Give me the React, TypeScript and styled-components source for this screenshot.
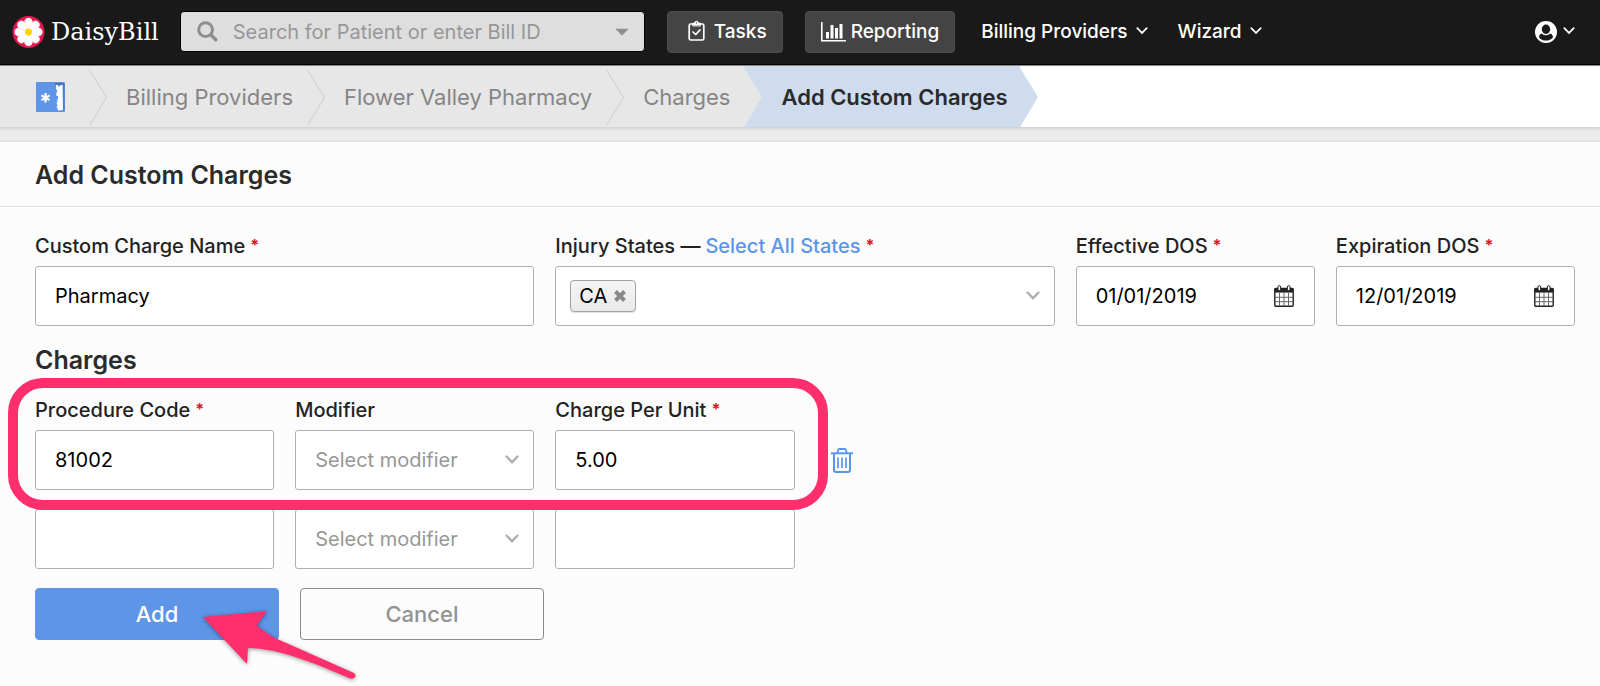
import React from "react";
import styled, { createGlobalStyle, css } from "styled-components";

const GlobalStyle = createGlobalStyle`
  *, *::before, *::after { box-sizing: border-box; }
  body {
    margin: 0;
    background: #fcfcfc;
    color: #222;
    font-family: Inter, "Liberation Sans", sans-serif;
    font-size: 20px;
    line-height: 24px;
  }
  button, input, select { font: inherit; margin: 0; }
`;

/* ---------- top bar ---------- */

const TopBar = styled.header`
  display: flex;
  align-items: center;
  height: 66px;
  padding: 0 25px 2px 12px;
  background: #191919;
  border-bottom: 1px solid #8c8c8c;
  box-shadow: inset 0 -1px 0 #000;
`;

const Brand = styled.a`
  display: flex;
  align-items: center;
  gap: 6px;
  flex: none;
  margin-right: 21px;
  color: #fff;
  font-family: "DejaVu Serif", serif;
  font-size: 24px;
  text-decoration: none;
`;

const SearchBox = styled.label`
  display: flex;
  align-items: center;
  flex: 0 1 465px;
  height: 41px;
  margin-right: 22px;
  padding: 0 15px 0 16px;
  background: #dedede;
  border: 1px solid #000;
  border-radius: 4px;
  min-width: 0;
`;

const SearchInput = styled.input`
  flex: 1;
  min-width: 0;
  margin-left: 15px;
  padding: 0;
  border: 0;
  outline: 0;
  background: transparent;
  color: #333;
  &::placeholder { color: #979797; opacity: 1; }
`;

const navItem = css`
  display: flex;
  align-items: center;
  flex: none;
  color: #fff;
  font-size: 19px;
  font-weight: 500;
  white-space: nowrap;
`;

const NavButton = styled.a<{ $gap: number; $inset: number }>`
  ${navItem}
  gap: ${(p) => p.$gap}px;
  height: 42px;
  margin-right: 22px;
  padding: 0 15px 0 ${(p) => p.$inset}px;
  background: #444;
  border: 1px solid #4d4d4d;
  border-radius: 4px;
  text-decoration: none;
`;

const NavMenu = styled.button`
  ${navItem}
  gap: 8px;
  margin-left: 4px;
  margin-right: 26px;
  padding: 0;
  border: 0;
  background: none;
`;

const UserMenu = styled(NavMenu)`
  gap: 6px;
  margin-left: auto;
  margin-right: 0;
`;

/* ---------- breadcrumb ---------- */

const Trail = styled.nav`
  background: #fff;
  box-shadow: 0 1px 4px rgba(0, 0, 0, 0.16);
  position: relative;
`;

const TrailList = styled.ol`
  display: flex;
  height: 61px;
  margin: 0;
  padding: 0;
  list-style: none;
`;

const Crumb = styled.li<{ $current?: boolean }>`
  display: flex;
  flex: none;
  align-items: center;
  background: ${(p) => (p.$current ? "#cfdcee" : "#e7e7e7")};
`;

const CrumbLink = styled.a<{ $current?: boolean }>`
  padding: 0 ${(p) => (p.$current ? 12 : 14)}px 0 19px;
  color: ${(p) => (p.$current ? "#2a2a2a" : "#858585")};
  font-size: 22px;
  font-weight: ${(p) => (p.$current ? 600 : 400)};
  text-decoration: none;
  white-space: nowrap;
`;

const HomeLink = styled.a`
  display: flex;
  padding: 0 24px 0 36px;
`;

/* ---------- panel ---------- */

const Page = styled.main`
  background: #ebebeb;
  padding-top: 15px;
`;

const Panel = styled.section`
  background: #fcfcfc;
  box-shadow: 0 -1px 2px rgba(0, 0, 0, 0.06);
`;

const heading = css`
  font-size: 25px;
  line-height: 32px;
  font-weight: 600;
  color: #2b2b2b;
`;

const Title = styled.h1`
  ${heading}
  margin: 0;
  padding: 17px 35px 15px;
  border-bottom: 1px solid #e0e0e0;
`;

const Form = styled.form`
  padding: 27px 25px 46px 35px;
`;

const Grid = styled.div`
  display: grid;
  grid-template-columns: repeat(6, minmax(0, 1fr));
  column-gap: 21px;
`;

const Subtitle = styled.h2`
  ${heading}
  margin: 18px 0 22px;
`;

const Field = styled.div<{ $span?: number }>`
  grid-column: span ${(p) => p.$span ?? 1};
  min-width: 0;
`;

const Caption = styled.div`
  display: flex;
  gap: 5px;
  height: 24px;
  margin-bottom: 8px;
  font-weight: 500;
  white-space: nowrap;
`;

const Star = styled.span`
  color: #d8141c;
  font-size: 16px;
  font-weight: 700;
  line-height: 22px;
`;

const TextLink = styled.a`
  color: #5b95e8;
  text-decoration: none;
`;

const control = css`
  width: 100%;
  height: 60px;
  background: #fff;
  border: 1px solid #b0b0b0;
  border-radius: 3px;
  color: #000;
`;

const TextInput = styled.input`
  ${control}
  padding: 0 19px;
`;

const Box = styled.div`
  ${control}
  display: flex;
  align-items: center;
  padding: 0 14px;
`;

const BoxInput = styled.input`
  flex: 1;
  min-width: 0;
  padding: 0 5px;
  border: 0;
  outline: 0;
  background: transparent;
  color: #000;
`;

const Tag = styled.span`
  display: flex;
  align-items: center;
  gap: 7px;
  height: 32px;
  padding: 0 9px 0 8px;
  background: linear-gradient(#f5f5f5, #e9e9e9);
  border: 1px solid #a3a3a3;
  border-radius: 4px;
  box-shadow: 0 1px 1px rgba(0, 0, 0, 0.12);
`;

const IconButton = styled.button`
  display: flex;
  flex: none;
  padding: 0;
  border: 0;
  background: none;
  color: inherit;
`;

const CalendarButton = styled(IconButton)`
  margin-right: 6px;
`;

const SelectWrap = styled.div`
  display: grid;
  align-items: center;
  & > * { grid-area: 1 / 1; }
  & > svg { justify-self: end; margin-right: 15px; pointer-events: none; }
`;

const Select = styled.select`
  ${control}
  padding: 0 40px 0 19px;
  appearance: none;
  color: #979797;
`;

const FirstCharge = styled.div`
  position: relative;
  z-index: 1;
  grid-column: span 3;
  display: grid;
  grid-template-columns: repeat(3, minmax(0, 1fr));
  column-gap: 21px;
`;

const Highlight = styled.div`
  position: absolute;
  inset: -20px -33px -20px -27px;
  border: 10px solid #ff2e6c;
  border-radius: 35px;
  pointer-events: none;
`;

const DeleteCell = styled.div`
  display: flex;
  align-items: center;
  height: 60px;
  margin-top: 32px;
  padding-left: 15px;
  color: #5b95e8;
`;

const NextCharge = styled(Grid)`
  margin-top: 19px;
`;

const Actions = styled.div`
  position: relative;
  display: flex;
  gap: 21px;
  margin-top: 19px;
`;

const Action = styled.button<{ $primary?: boolean }>`
  flex: 0 1 244px;
  height: 52px;
  border: 1px solid ${(p) => (p.$primary ? "#5e95e7" : "#8a8a8a")};
  border-radius: 4px;
  background: ${(p) => (p.$primary ? "#5e95e7" : "#fcfcfc")};
  color: ${(p) => (p.$primary ? "#fff" : "#929292")};
  font-size: 22px;
  font-weight: 500;
`;

const Pointer = styled.svg`
  position: absolute;
  left: 164px;
  top: 20px;
  pointer-events: none;
  filter: drop-shadow(0 1px 2px rgba(0, 0, 0, 0.4));
`;

/* ---------- icons ---------- */

const Daisy = () => (
  <svg width="33" height="34" viewBox="-17 -17 34 34" aria-hidden="true">
    <circle r="16.5" fill="#e0174b" />
    {[0, 45, 90, 135, 180, 225, 270, 315].map((a) => (
      <path
        key={a}
        d="M0 0C-3.5-5-5-10-3.6-12.4C-2.4-15 2.4-15 3.6-12.4C5-10 3.5-5 0 0Z"
        fill="#fff"
        stroke="#f6d3dc"
        strokeWidth=".4"
        transform={`rotate(${a})`}
      />
    ))}
    <circle r="3.6" fill="#ffd400" />
  </svg>
);

const SearchIcon = () => (
  <svg width="21" height="21" viewBox="0 0 21 21" fill="none" stroke="#8e8e8e" aria-hidden="true">
    <circle cx="8.6" cy="8.6" r="6.9" strokeWidth="3" />
    <path d="M13.8 13.8L18.8 18.8" strokeWidth="3.4" strokeLinecap="round" />
  </svg>
);

const CaretIcon = () => (
  <svg width="14" height="8" viewBox="0 0 14 8" aria-hidden="true">
    <path d="M1.2.8H12.8Q13.4.8 13 1.5L7.6 7Q7 7.500 6.400 7L1 1.500Q.6.8 1.200.8Z" fill="#8e8e8e" />
  </svg>
);

const TasksIcon = () => (
  <svg width="17" height="24" viewBox="0 0 17 24" fill="none" stroke="#fff" strokeLinecap="round" strokeLinejoin="round" aria-hidden="true">
    <rect x="1.200" y="4" width="14.600" height="16" rx="1.500" strokeWidth="1.700" />
    <path d="M4.500 5.600V3.200H6.400C6.500.6 10.500.6 10.600 3.200H12.500V5.600Z" fill="#fff" strokeWidth=".8" />
    <circle cx="8.500" cy="2.900" r=".7" fill="#444" stroke="none" />
    <path d="M5 12L7.700 14.500L12 9.900" strokeWidth="1.700" />
  </svg>
);

const ChartIcon = () => (
  <svg width="25" height="20" viewBox="0 0 25 20" aria-hidden="true">
    <path d="M.8 0V18.800H25" fill="none" stroke="#fff" strokeWidth="1.600" />
    <path d="M5 10H8V16.500H5ZM9.500 3H12.500V16.500H9.500ZM14 6H17V16.500H14ZM18.500 2H21.500V16.500H18.500Z" fill="#fff" />
  </svg>
);

const Chevron = ({ w = 14, color = "#fff", thick = 2 }: { w?: number; color?: string; thick?: number }) => (
  <svg width={w} height="11" viewBox="0 0 14 11" fill="none" stroke={color} strokeWidth={thick} strokeLinecap="round" aria-hidden="true">
    <path d="M1.500 1.500L7 7.200L12.500 1.500" />
  </svg>
);

const UserIcon = () => (
  <svg width="22" height="22" viewBox="0 0 22 22" aria-hidden="true">
    <circle cx="11" cy="11" r="11" fill="#fff" />
    <path d="M4 16.500C4 13.500 6 12.400 7.600 12.600C9.400 14.500 12.600 14.500 14.400 12.600C16 12.400 18 13.500 18 16.500C15 20.600 7 20.600 4 16.500Z" fill="#191919" />
    <ellipse cx="11" cy="8.200" rx="4.200" ry="4.700" fill="#191919" />
    <path d="M6.900 12.200C8.600 14.300 13.400 14.300 15.100 12.200" fill="none" stroke="#fff" strokeWidth="1" />
  </svg>
);

const HomeIcon = () => (
  <svg width="29" height="30" viewBox="0 0 29 30" aria-hidden="true">
    <rect width="29" height="30" rx="1" fill="#5e95e7" />
    <path d="M19 1H28V3H19Z" fill="#4a75bd" />
    <path d="M27 2H28.500V28H27Z" fill="#4a7fce" />
    <path d="M20 3H22V5L26.500 2.500L27 28L22 28.500L21.500 26L20.500 25.500L21.500 23L20.500 21L21.800 19L20.500 17.500H22V14H20.500L20.300 11L21.500 9L20 7Z" fill="#fff" />
    <path d="M9.500 11V20.500M5.400 13.400L13.600 18.100M13.600 13.400L5.400 18.100" stroke="#fff" strokeWidth="2.200" />
  </svg>
);

const CloseIcon = () => (
  <svg width="12" height="12" viewBox="0 0 12 12" stroke="#888" strokeWidth="4" aria-hidden="true">
    <path d="M1.500 1.500L10.500 10.500M10.500 1.500L1.500 10.500" />
  </svg>
);

const CalendarIcon = () => (
  <svg width="20" height="22" viewBox="0 0 20 22" aria-hidden="true">
    <rect x=".8" y="3.500" width="18.400" height="17.700" rx="1" fill="#fff" stroke="#222" strokeWidth="1.400" />
    <path d="M.6 3.200H19.400V7.600H.6Z" fill="#222" />
    <path d="M1 12.300H19M1 16.700H19M5.500 7.500V21M10 7.500V21M14.500 7.500V21" stroke="#666" strokeWidth="1" />
    <rect x="4" y=".6" width="2.600" height="5" rx="1.300" fill="#fff" stroke="#222" strokeWidth="1" />
    <rect x="13.400" y=".6" width="2.600" height="5" rx="1.300" fill="#fff" stroke="#222" strokeWidth="1" />
  </svg>
);

const TrashIcon = () => (
  <svg width="22" height="25" viewBox="0 0 22 25" fill="none" stroke="currentColor" aria-hidden="true">
    <path d="M0 5.300H22" strokeWidth="2" />
    <path d="M6.300 5L7 2Q7.200 1 8.200 1H13.800Q14.800 1 15 2L15.700 5" strokeWidth="1.800" />
    <path d="M3 5.500V22Q3 24 5 24H17Q19 24 19 22V5.500" strokeWidth="2" />
    <path d="M7 9.500V20M11 9.500V20M15 9.500V20" strokeWidth="1.700" />
  </svg>
);

const CrumbEdge = ({ kind }: { kind: "line" | "before" | "end" }) => (
  <svg width="18" height="61" viewBox="0 0 18 61" aria-hidden="true">
    {kind === "line" && <path d="M.5 4L17.500 31.500L.5 59.500" fill="none" stroke="#d2d2d2" strokeWidth="1.200" />}
    {kind === "before" && <path d="M0 0V2L18 31L0 61H18V0Z" fill="#cfdcee" />}
    {kind === "end" && <path d="M0 0V2L18 31L0 61H18V0Z" fill="#fff" />}
  </svg>
);

/* ---------- parts ---------- */

const Required = () => <Star aria-hidden="true">*</Star>;

const ModifierSelect = ({ id, label }: { id: string; label?: string }) => (
  <SelectWrap>
    <Select id={id} aria-label={label} defaultValue="">
      <option value="">Select modifier</option>
    </Select>
    <Chevron color="#b0b0b0" thick={2.4} />
  </SelectWrap>
);

const DateField = ({ id, label, value }: { id: string; label: string; value: string }) => (
  <Field>
    <Caption>
      <label htmlFor={id}>{label}</label>
      <Required />
    </Caption>
    <Box>
      <BoxInput id={id} defaultValue={value} />
      <CalendarButton type="button" aria-label={`Choose ${label}`}>
        <CalendarIcon />
      </CalendarButton>
    </Box>
  </Field>
);

export default function App() {
  return (
    <>
      <GlobalStyle />
      <TopBar>
        <Brand href="#">
          <Daisy />
          DaisyBill
        </Brand>
        <SearchBox>
          <SearchIcon />
          <SearchInput aria-label="Search" placeholder="Search for Patient or enter Bill ID" />
          <CaretIcon />
        </SearchBox>
        <NavButton href="#" $gap={9} $inset={20}>
          <TasksIcon />
          Tasks
        </NavButton>
        <NavButton href="#" $gap={5} $inset={15}>
          <ChartIcon />
          Reporting
        </NavButton>
        <NavMenu type="button">
          Billing Providers
          <Chevron w={12} />
        </NavMenu>
        <NavMenu type="button">
          Wizard
          <Chevron w={12} />
        </NavMenu>
        <UserMenu type="button" aria-label="Account">
          <UserIcon />
          <Chevron w={12} />
        </UserMenu>
      </TopBar>

      <Trail aria-label="Breadcrumb">
        <TrailList>
          <Crumb>
            <HomeLink href="#" aria-label="Home">
              <HomeIcon />
            </HomeLink>
            <CrumbEdge kind="line" />
          </Crumb>
          <Crumb>
            <CrumbLink href="#">Billing Providers</CrumbLink>
            <CrumbEdge kind="line" />
          </Crumb>
          <Crumb>
            <CrumbLink href="#">Flower Valley Pharmacy</CrumbLink>
            <CrumbEdge kind="line" />
          </Crumb>
          <Crumb>
            <CrumbLink href="#">Charges</CrumbLink>
            <CrumbEdge kind="before" />
          </Crumb>
          <Crumb $current>
            <CrumbLink href="#" $current aria-current="page">
              Add Custom Charges
            </CrumbLink>
            <CrumbEdge kind="end" />
          </Crumb>
        </TrailList>
      </Trail>

      <Page>
        <Panel>
          <Title>Add Custom Charges</Title>
          <Form onSubmit={(e) => e.preventDefault()}>
            <Grid>
              <Field $span={2}>
                <Caption>
                  <label htmlFor="name">Custom Charge Name</label>
                  <Required />
                </Caption>
                <TextInput id="name" defaultValue="Pharmacy" />
              </Field>
              <Field $span={2}>
                <Caption>
                  <label htmlFor="states">Injury States —</label>
                  <TextLink href="#">Select All States</TextLink>
                  <Required />
                </Caption>
                <Box>
                  <Tag>
                    CA
                    <IconButton type="button" aria-label="Remove CA">
                      <CloseIcon />
                    </IconButton>
                  </Tag>
                  <BoxInput id="states" />
                  <Chevron color="#b0b0b0" thick={2.4} />
                </Box>
              </Field>
              <DateField id="effective" label="Effective DOS" value="01/01/2019" />
              <DateField id="expiration" label="Expiration DOS" value="12/01/2019" />
            </Grid>

            <Subtitle>Charges</Subtitle>
            <Grid>
              <FirstCharge>
                <Field>
                  <Caption>
                    <label htmlFor="code-1">Procedure Code</label>
                    <Required />
                  </Caption>
                  <TextInput id="code-1" defaultValue="81002" />
                </Field>
                <Field>
                  <Caption>
                    <label htmlFor="modifier-1">Modifier</label>
                  </Caption>
                  <ModifierSelect id="modifier-1" />
                </Field>
                <Field>
                  <Caption>
                    <label htmlFor="unit-1">Charge Per Unit</label>
                    <Required />
                  </Caption>
                  <TextInput id="unit-1" defaultValue="5.00" />
                </Field>
                <Highlight />
              </FirstCharge>
              <DeleteCell>
                <IconButton type="button" aria-label="Delete charge">
                  <TrashIcon />
                </IconButton>
              </DeleteCell>
            </Grid>
            <NextCharge>
              <TextInput aria-label="Procedure Code" />
              <ModifierSelect id="modifier-2" label="Modifier" />
              <TextInput aria-label="Charge Per Unit" />
            </NextCharge>

            <Actions>
              <Action type="submit" $primary>
                Add
              </Action>
              <Action type="button">Cancel</Action>
              <Pointer width="164" height="72" viewBox="0 0 164 72" aria-hidden="true">
                <path
                  d="M4 9L68 3L58 17Q62 22 76 30L155 65Q158 68 155 70Q153 71 150 70C120 57 80 40 49 40L48 56Z"
                  fill="#ff2e6c"
                />
              </Pointer>
            </Actions>
          </Form>
        </Panel>
      </Page>
    </>
  );
}
